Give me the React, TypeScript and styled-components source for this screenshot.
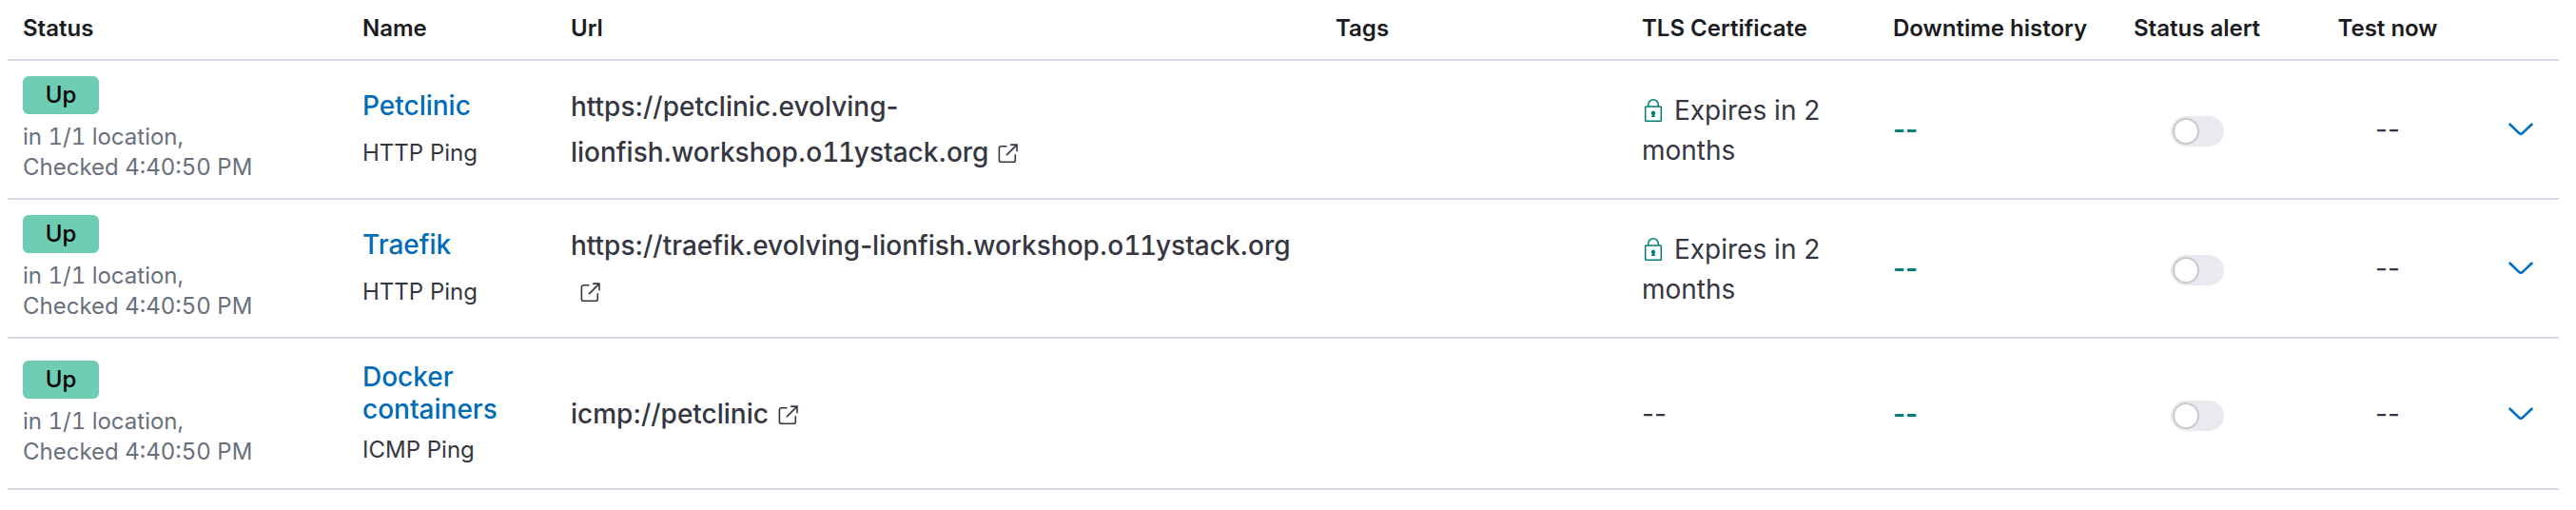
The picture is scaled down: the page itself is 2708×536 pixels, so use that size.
import React from 'react';
import styled, { createGlobalStyle } from 'styled-components';

const GlobalStyle = createGlobalStyle`
  * { box-sizing: border-box; }
  body {
    margin: 0;
    background: #fff;
    color: #343741;
    font-family: Inter, "Liberation Sans", sans-serif;
    font-size: 28px;
    line-height: 42px;
  }
`;

const Table = styled.div`
  display: flex;
  flex-direction: column;
  width: 2682px;
  margin-left: 8px;
`;

const Row = styled.div<{ $height: number }>`
  display: grid;
  grid-template-columns: 357px 219px 804px 322px 264px 253px 181px 204px 78px;
  height: ${(p) => p.$height}px;
  border-bottom: 2px solid #d3dae6;
`;

const Cell = styled.div<{ $align?: 'center' | 'flex-start'; $middle?: boolean; $shift?: number; $right?: number }>`
  display: flex;
  flex-direction: column;
  justify-content: ${(p) => (p.$middle ? 'center' : 'flex-start')};
  align-items: ${(p) => p.$align ?? 'flex-start'};
  padding: ${(p) => p.$shift ?? 0}px ${(p) => p.$right ?? 16}px 0 16px;
  white-space: nowrap;
`;

const Heading = styled.span`
  color: #1a1c21;
  font-size: 24px;
  line-height: 36px;
  font-weight: 600;
`;

const Badge = styled.span`
  width: 80px;
  height: 40px;
  margin-bottom: 8px;
  border-radius: 6px;
  background: #6dccb1;
  color: #000;
  font-size: 24px;
  font-weight: 500;
  line-height: 40px;
  text-align: center;
`;

const Subdued = styled.span`
  color: #69707d;
  font-size: 24px;
  line-height: 32px;
  font-variant-numeric: tabular-nums;
`;

const NameLink = styled.a`
  color: #006bb8;
  font-weight: 500;
  line-height: 34px;
`;

const Kind = styled.span<{ $gap: number }>`
  margin-top: ${(p) => p.$gap}px;
  font-size: 24px;
  line-height: 36px;
`;

const UrlText = styled.span`
  font-weight: 500;
  line-height: 48px;
`;

const Digits = styled.span`
  font-variant-numeric: tabular-nums;
  letter-spacing: -1.3px;
`;

const PopoutIcon = styled.svg`
  width: 24px;
  height: 24px;
  margin-left: 9px;
  vertical-align: -4px;
`;

const LockIcon = styled.svg`
  width: 24px;
  height: 28px;
  margin-right: 10px;
  vertical-align: -4px;
`;

const Dashes = styled.span<{ $good?: boolean }>`
  color: ${(p) => (p.$good ? '#007e77' : 'inherit')};
  font-weight: ${(p) => (p.$good ? 600 : 400)};
`;

const Switch = styled.span`
  display: flex;
  align-items: center;
  width: 56px;
  height: 32px;
  padding-left: 2px;
  border-radius: 16px;
  background: #e9eaef;
`;

const Thumb = styled.span`
  width: 28px;
  height: 28px;
  border: 2px solid #c9cacd;
  border-radius: 50%;
  background: #fff;
`;

const Chevron = styled.svg`
  width: 28px;
  height: 14px;
`;

const Popout = () => (
  <PopoutIcon viewBox="0 0 24 24" fill="none" stroke="#343741" strokeWidth="1.6">
    <path d="M10.5 3.7H4.5Q2.4 3.7 2.4 5.8V18.2Q2.4 20.3 4.5 20.3H17.2Q19.3 20.3 19.3 18.2V12.3" />
    <path d="M14.2 2.1H21V9.3M21 2.1 10 13.1" />
  </PopoutIcon>
);

const Lock = () => (
  <LockIcon viewBox="0 0 24 28" fill="none" stroke="#007e77" strokeWidth="1.5">
    <rect x="3.7" y="10" width="16.6" height="15.3" rx="0.8" />
    <path d="M6.7 10V8.1a5.3 5.3 0 0 1 10.6 0V10" />
    <path d="M12 14.6a2.3 2.3 0 0 1 1.2 4.2l.9 2.2h-4.2l.9-2.2a2.3 2.3 0 0 1 1.2-4.2Z" fill="#007e77" stroke="none" />
  </LockIcon>
);

interface Monitor {
  name: string[];
  kind: string;
  url: string[];
  tls: boolean;
  height: number;
}

const monitors: Monitor[] = [
  { name: ['Petclinic'], kind: 'HTTP Ping', url: ['https://petclinic.evolving-', 'lionfish.workshop.o11ystack.org'], tls: true, height: 146 },
  { name: ['Traefik'], kind: 'HTTP Ping', url: ['https://traefik.evolving-lionfish.workshop.o11ystack.org', ''], tls: true, height: 146 },
  { name: ['Docker', 'containers'], kind: 'ICMP Ping', url: ['icmp://petclinic'], tls: false, height: 159 },
];

// Gives runs of digits an even width; hyphens keep their natural one.
const evenDigits = (line: string) =>
  line.split(/(\d+)/).map((part, i) => (i % 2 ? <Digits key={i}>{part}</Digits> : part));

const MonitorRow = ({ m }: { m: Monitor }) => {
  const tall = m.name.length > 1;
  return (
    <Row $height={m.height}>
      <Cell $shift={tall ? 23 : 16}>
        <Badge>Up</Badge>
        <Subdued>in 1/1 location,</Subdued>
        <Subdued>Checked 4:40:50 PM</Subdued>
      </Cell>
      <Cell $shift={tall ? 23 : 30}>
        {m.name.map((part) => <NameLink key={part}>{part}</NameLink>)}
        <Kind $gap={tall ? 8 : 15}>{m.kind}</Kind>
      </Cell>
      <Cell $shift={tall ? 55 : 24}>
        {m.url.map((line, i) => (
          <UrlText key={i}>
            {evenDigits(line)}
            {i === m.url.length - 1 && <Popout />}
          </UrlText>
        ))}
      </Cell>
      <Cell />
      <Cell $shift={tall ? 58 : 31}>
        {m.tls ? (
          <>
            <span><Lock />Expires in 2</span>
            <span>months</span>
          </>
        ) : <Dashes>--</Dashes>}
      </Cell>
      <Cell $middle><Dashes $good>--</Dashes></Cell>
      <Cell $middle $align="center" $shift={4} $right={31}><Switch><Thumb /></Switch></Cell>
      <Cell $middle $align="center"><Dashes>--</Dashes></Cell>
      <Cell $middle $align="center" $right={18}>
        <Chevron viewBox="0 0 28 14" fill="none" stroke="#0071c2" strokeWidth="2.7" strokeLinecap="round">
          <path d="M2.6 1.7 12.4 11.1Q14 12.5 15.6 11.1L25.4 1.7" />
        </Chevron>
      </Cell>
    </Row>
  );
};

const columns = ['Status', 'Name', 'Url', 'Tags', 'TLS Certificate', 'Downtime history', 'Status alert', 'Test now', ''];

export default function App() {
  return (
    <>
      <GlobalStyle />
      <Table>
        <Row $height={64}>
          {columns.map((c, i) => (
            <Cell key={c} $shift={12} $align={i === 7 ? 'center' : 'flex-start'}><Heading>{c}</Heading></Cell>
          ))}
        </Row>
        {monitors.map((m) => <MonitorRow key={m.kind + m.name[0]} m={m} />)}
      </Table>
    </>
  );
}
